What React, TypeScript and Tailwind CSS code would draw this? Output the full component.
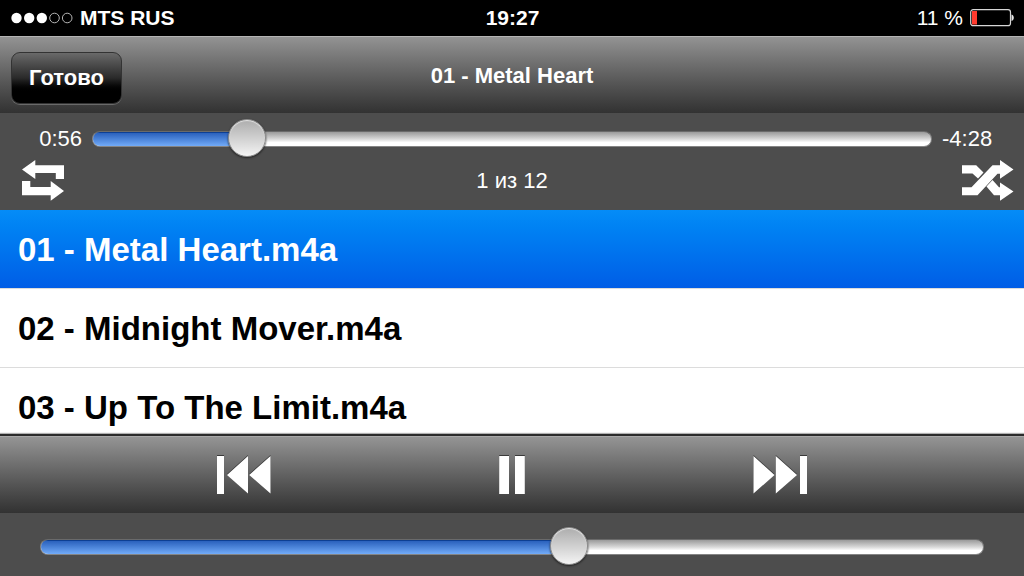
import { useState } from 'react';

const tracks = [
  { id: 1, file: '01 - Metal Heart.m4a' },
  { id: 2, file: '02 - Midnight Mover.m4a' },
  { id: 3, file: '03 - Up To The Limit.m4a' },
];

const THUMB = 38;

type SliderProps = {
  label: string;
  value: number;
  max: number;
  onChange: (value: number) => void;
};

function Slider({ label, value, max, onChange }: SliderProps) {
  const ratio = value / max;

  return (
    <div className="grid items-center">
      <div className="col-start-1 row-start-1 mt-[2px] h-4 rounded-full overflow-hidden border border-[#858585] border-t-[#6a6a6a] bg-linear-to-b from-[#9a9a9a] via-[#d8d8d8] to-white to-75%">
        <div
          className="h-full border-t border-[#0d3f93] bg-linear-to-b from-[#2a61bd] to-[#72abf8] shadow-[0_0_0_1px_#2f66b8]"
          style={{ width: `calc(${ratio * 100}% + ${THUMB / 2 - ratio * THUMB}px)` }}
        />
      </div>
      <input
        type="range"
        aria-label={label}
        min={0}
        max={max}
        value={value}
        onChange={(e) => onChange(Number(e.target.value))}
        className="col-start-1 row-start-1 w-full h-[38px] appearance-none bg-transparent cursor-pointer [&::-webkit-slider-thumb]:appearance-none [&::-webkit-slider-thumb]:size-[38px] [&::-webkit-slider-thumb]:rounded-full [&::-webkit-slider-thumb]:border [&::-webkit-slider-thumb]:border-[#8a8a8a] [&::-webkit-slider-thumb]:bg-linear-to-b [&::-webkit-slider-thumb]:from-[#adadad] [&::-webkit-slider-thumb]:to-[#f4f4f4] [&::-webkit-slider-thumb]:shadow-[inset_0_1px_1px_#e8e8e8,0_1px_2px_#222222]"
      />
    </div>
  );
}

function SignalDots() {
  return (
    <svg width="62" height="12" viewBox="0 0 62 12" fill="#fff" aria-hidden="true">
      <circle cx="5.5" cy="6" r="5.2" />
      <circle cx="18.2" cy="6" r="5.2" />
      <circle cx="30.8" cy="6" r="5.2" />
      <circle cx="43.5" cy="6" r="4.8" fill="none" stroke="#b5b5b5" />
      <circle cx="56.2" cy="6" r="4.8" fill="none" stroke="#b5b5b5" />
    </svg>
  );
}

function Battery() {
  return (
    <svg width="44" height="18" viewBox="0 0 44 18" aria-hidden="true">
      <rect x="0.7" y="0.7" width="39.8" height="16" rx="2.5" fill="none" stroke="#d6d6d6" strokeWidth="1.2" />
      <rect x="2" y="2" width="5" height="13.5" fill="#ff3b2f" />
      <path d="M41.5 5.5c1.600.6 2.300 1.800 2.300 3.200s-.7 2.600-2.300 3.200z" fill="#e6e6e6" />
    </svg>
  );
}

function RepeatIcon() {
  return (
    <svg width="42" height="41" viewBox="0 0 42 41" fill="#fff" aria-hidden="true">
      <path d="M0 9.500L13.300 0v5.200H42V19h-8.200v-6H13.300v6z" />
      <path d="M0 21h8.300v6h20.400v-6L42 31 28.700 40.700V35.200H0z" />
    </svg>
  );
}

function ShuffleIcon() {
  return (
    <svg width="52" height="41" viewBox="0 0 52 41" fill="#fff" aria-hidden="true">
      <path d="M0 5.200h14.200l7.300 7.300-5.500 6-5.500-5H0z" />
      <path d="M24.500 26.500l6-6.500 6.500 7.200h1V22.600l13.500 9L38 40.700v-5.500h-6z" />
      <path d="M0 27.300h9.500L30.500 5.200H38V0l13.500 9.500L38 18.700v-5h-2.500L15.500 35.200H0z" />
    </svg>
  );
}

const transportIcon = 'overflow-visible drop-shadow-[0_-1px_0_#3a3a3a]';

function PreviousIcon() {
  return (
    <svg width="54" height="39" viewBox="0 0 54 39" fill="#fff" className={transportIcon} aria-hidden="true">
      <path d="M0 1h7v38H0zM31 1v37.500L10 20zM53.500 1v37.500L32.200 20z" />
    </svg>
  );
}

function PauseIcon() {
  return (
    <svg width="26" height="39" viewBox="0 0 26 39" fill="#fff" className={transportIcon} aria-hidden="true">
      <path d="M.2 1H10v38H.2zM16 1h9.800v38H16z" />
    </svg>
  );
}

function PlayIcon() {
  return (
    <svg width="26" height="39" viewBox="0 0 26 39" fill="#fff" className={transportIcon} aria-hidden="true">
      <path d="M0 1v38l26-19z" />
    </svg>
  );
}

function NextIcon() {
  return (
    <svg width="54" height="39" viewBox="0 0 54 39" fill="#fff" className={transportIcon} aria-hidden="true">
      <path d="M.5 1v37.500L21.500 20zM22.800 1v37.500L44 20zM47 1h7v38h-7z" />
    </svg>
  );
}

export default function App() {
  const [position, setPosition] = useState(55);
  const [volume, setVolume] = useState(563);
  const [selected, setSelected] = useState(1);
  const [playing, setPlaying] = useState(true);

  return (
    <div className="h-screen flex flex-col bg-[#4d4d4d] text-white font-['Liberation_Sans',Arial,sans-serif]">
      {/* Status bar */}
      <div className="grid grid-cols-3 items-center h-9 shrink-0 pl-[11px] pr-[10px] bg-black text-[21px] leading-9">
        <div className="flex items-center gap-[7px]">
          <SignalDots />
          <span className="font-bold">MTS RUS</span>
        </div>
        <time className="text-center font-bold">19:27</time>
        <div className="flex items-center justify-end gap-[7px]">
          <span>11 %</span>
          <Battery />
        </div>
      </div>

      {/* Title bar */}
      <header className="grid grid-cols-[1fr_auto_1fr] items-center h-[77px] shrink-0 px-[11px] border-t border-[#b4b4b4] bg-linear-to-b from-[#939393] to-[#323232]">
        <button className="justify-self-start mt-[5px] h-[52px] px-[17px] rounded-[9px] border border-[#333333] bg-linear-to-b from-[#6a6a6a] via-[#2a2a2a] to-black to-80% text-[22px] font-bold shadow-[0_1px_0_#6a6a6a]">
          Готово
        </button>
        <h1 className="text-[22px] font-bold">01 - Metal Heart</h1>
      </header>

      {/* Playback position */}
      <section className="shrink-0 pt-[6px] pb-[9px] text-[22px]">
        <div className="grid grid-cols-[82px_1fr_82px] gap-x-[10px] items-center">
          <span className="text-right">0:56</span>
          <Slider label="Позиция" value={position} max={324} onChange={setPosition} />
          <span>-4:28</span>
        </div>
        <div className="grid grid-cols-3 items-center mt-[3px]">
          <button aria-label="Повтор" className="justify-self-start pl-[22px]">
            <RepeatIcon />
          </button>
          <span className="text-center">1 из 12</span>
          <button aria-label="Перемешать" className="justify-self-end pr-[10px]">
            <ShuffleIcon />
          </button>
        </div>
      </section>

      {/* Track list */}
      <ul className="flex-1 min-h-0 overflow-hidden bg-white text-black">
        {tracks.map((track) => (
          <li key={track.id} className="border-b border-[#dcdcdc]">
            <button
              onClick={() => setSelected(track.id)}
              className={`block w-full h-[78px] px-[18px] pt-[2px] text-left text-[33px] font-bold ${
                selected === track.id ? 'bg-linear-to-b from-[#058cf7] to-[#015de6] text-white' : ''
              }`}
            >
              {track.file}
            </button>
          </li>
        ))}
      </ul>

      {/* Transport controls */}
      <div className="flex items-center justify-center gap-[228px] h-[79px] shrink-0 border-t-2 border-[#2b2b2b] bg-linear-to-b from-[#969696] to-[#323232] shadow-[0_-1px_1px_#b0b0b0,inset_0_1px_0_#a8a8a8]">
        <button aria-label="Предыдущий">
          <PreviousIcon />
        </button>
        <button aria-label={playing ? 'Пауза' : 'Играть'} onClick={() => setPlaying(!playing)}>
          {playing ? <PauseIcon /> : <PlayIcon />}
        </button>
        <button aria-label="Следующий">
          <NextIcon />
        </button>
      </div>

      {/* Volume */}
      <div className="shrink-0 px-10 pt-[14px] pb-[11px]">
        <Slider label="Громкость" value={volume} max={1000} onChange={setVolume} />
      </div>
    </div>
  );
}
